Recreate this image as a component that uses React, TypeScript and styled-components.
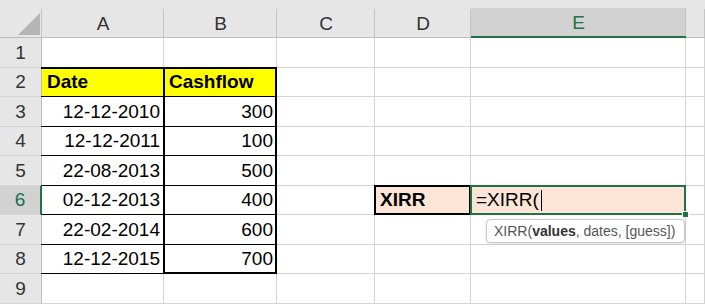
import React from 'react';
import styled, { createGlobalStyle, css } from 'styled-components';

const GlobalStyle = createGlobalStyle`
  body {
    margin: 0;
    background: #ffffff;
    font-family: "Liberation Sans", Arial, sans-serif;
  }
`;

const GRID = '#d4d4d4';
const HEAD_LINE = '#c4c4c4';
const GREEN = '#217346';

type Edges = [number, number, number, number];

const Sheet = styled.div`
  display: grid;
  grid-template-columns: 42px 122px 113px 98px 96px 215px 1fr;
  grid-template-rows: 38px 30px 29px 30px 29px 30px 29px 30px 29px 30px;
  width: 705px;
  height: 305px;
  overflow: hidden;
  font-size: 19px;
  color: #000;
`;

const Corner = styled.div`
  position: relative;
  background: linear-gradient(${HEAD_LINE}, ${HEAD_LINE}) right bottom / 1px 28px no-repeat, #e6e6e6;
  border-bottom: 1px solid #bdbdbd;
  display: flex;
  align-items: flex-end;
  justify-content: flex-end;
  padding: 0 2px 2px 0;
  box-sizing: border-box;
`;

const ColHead = styled.div<{ $active?: boolean }>`
  display: flex;
  align-items: center;
  justify-content: center;
  padding-top: 10px;
  box-sizing: border-box;
  color: #333;
  background: linear-gradient(${HEAD_LINE}, ${HEAD_LINE}) right bottom / 1px 28px no-repeat, #e6e6e6;
  border-bottom: 1px solid #bdbdbd;
  ${(p) =>
    p.$active &&
    css`
      color: ${GREEN};
      background: linear-gradient(${HEAD_LINE}, ${HEAD_LINE}) right bottom / 1px 28px no-repeat,
        linear-gradient(#d2d2d2, #d2d2d2) left bottom / 100% 28px no-repeat, #e6e6e6;
      border-bottom: 2px solid ${GREEN};
    `}
`;

const RowHead = styled.div<{ $active?: boolean }>`
  display: flex;
  align-items: center;
  justify-content: center;
  box-sizing: border-box;
  color: #333;
  background: #e6e6e6;
  border-right: 1px solid #bdbdbd;
  border-bottom: 1px solid ${GRID};
  ${(p) =>
    p.$active &&
    css`
      color: ${GREEN};
      background: #d2d2d2;
      border-right: 2px solid ${GREEN};
    `}
`;

const Cell = styled.div<{
  $fill?: string;
  $align?: 'left' | 'right';
  $bold?: boolean;
  $edges?: Edges;
  $edgeColor?: string;
  $front?: boolean;
}>`
  position: relative;
  display: flex;
  align-items: center;
  justify-content: ${(p) => (p.$align === 'right' ? 'flex-end' : 'flex-start')};
  padding: 0 ${(p) => (p.$align === 'right' ? '3px' : '5px')} 0 5px;
  box-sizing: border-box;
  white-space: nowrap;
  background: ${(p) => p.$fill || '#ffffff'};
  font-weight: ${(p) => (p.$bold ? 700 : 400)};
  border-right: 1px solid ${GRID};
  border-bottom: 1px solid ${GRID};
  z-index: ${(p) => (p.$front ? 2 : 'auto')};
  ${(p) =>
    p.$edges &&
    css`
      &::after {
        content: '';
        position: absolute;
        top: -1px;
        left: -1px;
        right: -1px;
        bottom: -1px;
        border-style: solid;
        border-color: ${p.$edgeColor || '#000'};
        border-width: ${p.$edges.map((w) => `${w}px`).join(' ')};
        pointer-events: none;
      }
    `}
`;

const FillHandle = styled.span`
  position: absolute;
  right: -4px;
  bottom: -4px;
  width: 5px;
  height: 5px;
  background: ${GREEN};
  border: 1px solid #ffffff;
  z-index: 3;
`;

const Caret = styled.span`
  display: inline-block;
  width: 1px;
  height: 21px;
  margin-left: 2px;
  background: #000;
`;

const Hint = styled.div`
  position: absolute;
  top: 33px;
  left: 15px;
  width: 199px;
  height: 24px;
  box-sizing: border-box;
  display: flex;
  align-items: center;
  padding-left: 7px;
  background: #ffffff;
  border: 1px solid #c8c8c8;
  border-radius: 4px;
  box-shadow: 0 1px 3px rgba(0, 0, 0, 0.12);
  font-size: 14px;
  color: #555;
  z-index: 4;
  b {
    color: #333;
  }
`;

const rows: [string, string][] = [
  ['12-12-2010', '300'],
  ['12-12-2011', '100'],
  ['22-08-2013', '500'],
  ['02-12-2013', '400'],
  ['22-02-2014', '600'],
  ['12-12-2015', '700'],
];

const Triangle = () => (
  <svg width="22" height="22" viewBox="0 0 22 22">
    <polygon points="22,0 22,22 0,22" fill="#b4b4b4" />
  </svg>
);

const Blank = () => (
  <>
    <Cell />
    <Cell />
    <Cell />
    <Cell />
    <Cell />
    <Cell />
  </>
);

export default function App() {
  return (
    <>
      <GlobalStyle />
      <Sheet>
        <Corner>
          <Triangle />
        </Corner>
        {['A', 'B', 'C', 'D'].map((c) => (
          <ColHead key={c}>{c}</ColHead>
        ))}
        <ColHead $active>E</ColHead>
        <ColHead />

        <RowHead>1</RowHead>
        <Blank />

        <RowHead>2</RowHead>
        <Cell $fill="#ffff00" $bold $edges={[2, 0, 1, 0]}>Date</Cell>
        <Cell $fill="#ffff00" $bold $edges={[2, 2, 1, 2]}>Cashflow</Cell>
        <Cell />
        <Cell />
        <Cell />
        <Cell />

        {rows.map(([date, amount], i) => {
          const n = i + 3;
          const last = n === 8;
          return (
            <React.Fragment key={n}>
              <RowHead $active={n === 6}>{n}</RowHead>
              <Cell $align="right" $edges={[1, 0, 1, 0]}>{date}</Cell>
              <Cell $align="right" $edges={[1, 2, last ? 2 : 1, 2]}>
                {amount}
              </Cell>
              <Cell />
              {n === 6 ? (
                <>
                  <Cell $fill="#fce4d6" $bold $edges={[2, 2, 2, 2]}>XIRR</Cell>
                  <Cell $fill="#fce4d6" $edges={[2, 2, 2, 2]} $edgeColor={GREEN} $front>
                    =XIRR(
                    <Caret />
                    <FillHandle />
                    <Hint>
                      XIRR(<b>values</b>, dates, [guess])
                    </Hint>
                  </Cell>
                </>
              ) : (
                <>
                  <Cell />
                  <Cell />
                </>
              )}
              <Cell />
            </React.Fragment>
          );
        })}

        <RowHead>9</RowHead>
        <Blank />
      </Sheet>
    </>
  );
}
